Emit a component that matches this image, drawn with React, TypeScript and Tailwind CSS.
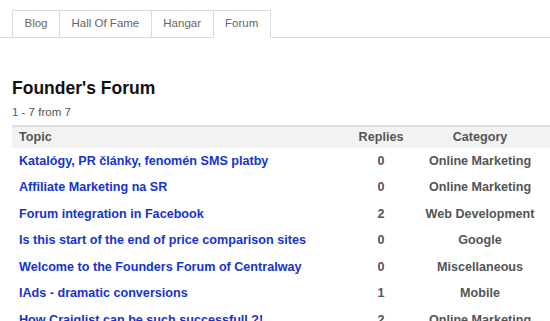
const tabs = ['Blog', 'Hall Of Fame', 'Hangar', 'Forum'];

const topics = [
    { title: 'Katalógy, PR články, fenomén SMS platby', replies: 0, category: 'Online Marketing' },
    { title: 'Affiliate Marketing na SR', replies: 0, category: 'Online Marketing' },
    { title: 'Forum integration in Facebook', replies: 2, category: 'Web Development' },
    { title: 'Is this start of the end of price comparison sites', replies: 0, category: 'Google' },
    { title: 'Welcome to the Founders Forum of Centralway', replies: 0, category: 'Miscellaneous' },
    { title: 'IAds - dramatic conversions', replies: 1, category: 'Mobile' },
    { title: 'How Craiglist can be such successfull ?!', replies: 2, category: 'Online Marketing' },
];

export default function App() {
    return (
        <div className="h-[321px] w-[550px] overflow-hidden bg-white font-['Liberation_Sans',Arial,sans-serif]">
            {/* Tabs */}
            <nav className="pt-[10px] border-b border-[#dcdcdc]">
                <ul className="flex ml-[12px] -mb-px">
                    {tabs.map((tab, i) => {
                        const active = tab === 'Forum';
                        return (
                            <li
                                key={tab}
                                className={
                                    'h-[28px] px-[11.5px] flex items-center text-[11.5px] text-[#666] border-t border-r border-[#dcdcdc] ' +
                                    (i === 0 ? 'border-l ' : '') +
                                    (active ? 'bg-white border-b border-b-white' : 'border-b border-b-[#dcdcdc]')
                                }
                            >
                                {tab}
                            </li>
                        );
                    })}
                </ul>
            </nav>

            <div className="pl-[12px]">
                <h1 className="mt-[40px] text-[17.5px] leading-[20px] font-bold text-[#111]">Founder's Forum</h1>
                <p className="mt-[7px] text-[11.5px] leading-[14px] text-[#555]">1 - 7 from 7</p>

                {/* Topics table */}
                <table className="mt-[6px] w-[538px] table-fixed border-separate border-spacing-0 border-t-2 border-[#dedede]">
                    <colgroup>
                        <col className="w-[340px]" />
                        <col className="w-[58px]" />
                        <col className="w-[140px]" />
                    </colgroup>
                    <thead>
                        <tr className="h-[21px] bg-[#f2f2f2] text-[12.6px] font-bold text-[#555]">
                            <th className="pl-[7px] p-0 text-left font-bold">Topic</th>
                            <th className="p-0 text-center font-bold">Replies</th>
                            <th className="p-0 text-center font-bold">Category</th>
                        </tr>
                    </thead>
                    <tbody className="text-[12.6px] font-bold">
                        {topics.map((t) => (
                            <tr key={t.title} className="h-[26.5px]">
                                <td className="pl-[7px] whitespace-nowrap">
                                    <a href="#" className="text-[#1533d1]">{t.title}</a>
                                </td>
                                <td className="text-center text-[#555]">{t.replies}</td>
                                <td className="text-center text-[#555] whitespace-nowrap">{t.category}</td>
                            </tr>
                        ))}
                    </tbody>
                </table>
            </div>
        </div>
    );
}
